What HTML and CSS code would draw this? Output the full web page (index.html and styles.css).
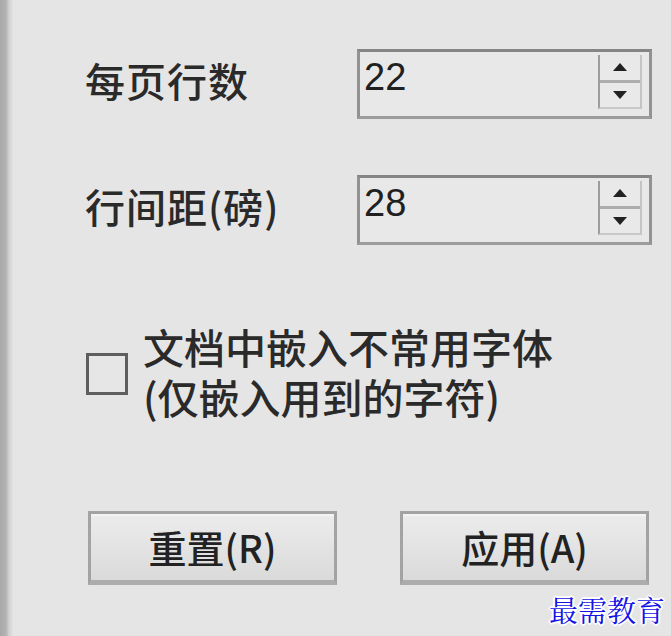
FILE: index.html
```html
<!DOCTYPE html>
<html lang="zh-CN">
<head>
<meta charset="utf-8">
<link rel="stylesheet" href="styles.css">
</head>
<body>
<div class="page">
  <div class="edge"></div>
  <div class="panel">
    <div class="fields">
      <div class="label">每页行数</div>
      <div class="spin">
        <span class="value">22</span>
        <div class="arrows">
          <div class="arrow up"><span class="tri-up"></span></div>
          <div class="arrow down"><span class="tri-down"></span></div>
        </div>
      </div>
      <div class="label">行间距(磅)</div>
      <div class="spin">
        <span class="value">28</span>
        <div class="arrows">
          <div class="arrow up"><span class="tri-up"></span></div>
          <div class="arrow down"><span class="tri-down"></span></div>
        </div>
      </div>
    </div>
    <div class="check-row">
      <div class="checkbox"></div>
      <div class="check-text">
        <div class="check-line">文档中嵌入不常用字体</div>
        <div class="check-line">(仅嵌入用到的字符)</div>
      </div>
    </div>
    <div class="buttons">
      <div class="btn">重置(R)</div>
      <div class="btn">应用(A)</div>
    </div>
  </div>
  <div class="watermark">最需教育</div>
</div>
</body>
</html>
```
FILE: styles.css
```css
html, body {
  margin: 0;
  padding: 0;
  background: #e5e5e5;
}
.page {
  position: relative;
  width: 671px;
  height: 636px;
  display: flex;
  overflow: hidden;
  font-family: "Noto Sans CJK SC", "Noto Sans", sans-serif;
  color: #262626;
}
.edge {
  width: 13px;
  flex: none;
  background: linear-gradient(to right, #a9a9a9 0px, #b3b3b3 6px, #d2d2d2 9px, #e2e2e2 13px);
}
.panel {
  padding: 49px 0 0 72px;
  flex: 1;
}
.fields {
  display: grid;
  grid-template-columns: 272px 295px;
  grid-auto-rows: 70px;
  row-gap: 56px;
  align-items: center;
}
.label {
  font-size: 40px;
  line-height: 50px;
  font-weight: 500;
  margin-top: -8px;
  letter-spacing: 1px;
  color: #2a2a2a;
}
.spin {
  height: 70px;
  box-sizing: border-box;
  border: 3px solid #929292;
  border-top-color: #858585;
  border-bottom-color: #9c9c9c;
  background: #e8e8e8;
  display: flex;
  align-items: flex-start;
  padding: 3px 7px 8px 4px;
}
.value {
  font-family: "Liberation Sans", "Noto Sans", sans-serif;
  font-size: 38px;
  line-height: 44px;
  color: #202020;
}
.arrows {
  margin-left: auto;
  width: 44px;
  height: 54px;
  box-sizing: border-box;
  border-left: 2px solid #9d9d9d;
  border-right: 2px solid #c4c4c4;
  border-bottom: 2px solid #c8c8c8;
  display: flex;
  flex-direction: column;
}
.arrow {
  flex: 1;
  display: flex;
  align-items: center;
  justify-content: center;
  background: #e9e9e9;
}
.arrow.up {
  border-bottom: 3px solid #adadad;
}
.tri-up {
  width: 0;
  height: 0;
  border-left: 7px solid transparent;
  border-right: 7px solid transparent;
  border-bottom: 8px solid #222;
}
.tri-down {
  width: 0;
  height: 0;
  border-left: 7px solid transparent;
  border-right: 7px solid transparent;
  border-top: 8px solid #222;
}
.check-row {
  display: flex;
  align-items: center;
  margin-top: 76px;
  margin-left: 1px;
  gap: 15px;
}
.checkbox {
  width: 42px;
  height: 42px;
  box-sizing: border-box;
  border: 3px solid #5e5e5e;
  background: #e6e6e6;
  margin-top: 6px;
}
.check-text {
  display: flex;
  flex-direction: column;
}
.check-line {
  font-size: 41px;
  line-height: 50px;
  height: 50px;
  font-weight: 500;
  color: #2a2a2a;
}
.buttons {
  display: flex;
  gap: 63px;
  margin-top: 90px;
  margin-left: 3px;
}
.btn {
  width: 249px;
  height: 74px;
  box-sizing: border-box;
  border: 3px solid #a3a3a3;
  border-bottom: 5px solid #acacac;
  background: linear-gradient(to bottom, #ececec 0%, #e3e3e3 50%, #dadada 100%);
  display: flex;
  align-items: center;
  justify-content: center;
  font-size: 38px;
  line-height: 46px;
  font-weight: 500;
  color: #222;
  box-shadow: inset 0 2px 0 #f3f3f3;
}
.watermark {
  position: absolute;
  right: 6px;
  bottom: 8px;
  font-family: "Noto Serif CJK SC", "Noto Sans CJK SC", serif;
  font-size: 29px;
  line-height: 36px;
  color: #1414e6;
  text-shadow: 1px 1px 0 #fff, -1px -1px 0 #fff, 1px -1px 0 #fff, -1px 1px 0 #fff, 0 2px 0 #fff, 2px 0 0 #fff, 0 -2px 0 #fff, -2px 0 0 #fff;
}
```
